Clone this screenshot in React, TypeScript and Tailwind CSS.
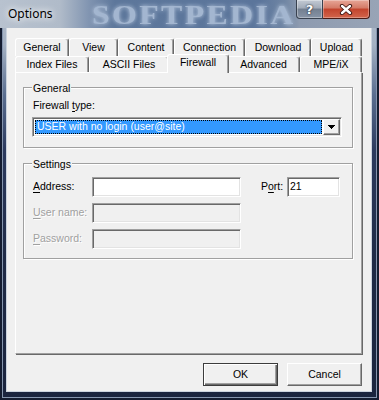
import React from 'react';

const U = ({ children }: { children: React.ReactNode }) => (
  <span className="underline underline-offset-[2px]">{children}</span>
);

const raised =
  'bg-[#f0f0f0] border border-t-white border-l-white border-r-[#696969] border-b-[#696969] shadow-[inset_-1px_-1px_0_#a0a0a0]';
const sunken =
  'border border-t-[#a0a0a0] border-l-[#a0a0a0] border-r-white border-b-white shadow-[inset_1px_1px_0_#696969,inset_-1px_-1px_0_#e3e3e3]';
const tabEdge =
  'bg-[#f0f0f0] border-t border-l border-r border-t-white border-l-white border-r-[#696969] shadow-[inset_-1px_0_0_#a0a0a0] rounded-t-[3px]';

const Tab = ({ label, className, selected }: { label: string; className: string; selected?: boolean }) => {
  if (selected) {
    return (
      <div className={`relative z-10 -mx-[2px] -mt-[2px] h-[19px] flex items-center justify-center pb-[2px] ${tabEdge} ${className}`}>
        {label}
      </div>
    );
  }
  return <div className={`h-full flex items-center justify-center ${tabEdge} ${className}`}>{label}</div>;
};

const Group = ({ title, className, children }: { title: string; className: string; children: React.ReactNode }) => (
  <div className={`relative w-[330px] pl-[8px] border border-[#a0a0a0] shadow-[inset_1px_1px_0_#fff,1px_1px_0_#fff] ${className}`}>
    <span className="absolute left-[8px] top-[-6px] bg-[#f0f0f0] px-[1px] leading-[13px]">{title}</span>
    {children}
  </div>
);

const TitleBar = () => (
  <div className="relative h-[28px] flex items-start bg-[linear-gradient(to_right,#b8c2cf_0px,#b0bbc9_60px,#7f93b0_90px,#5d779b_115px,#5b759b_260px,#7086a4_285px,#8e9bb0_300px,#98a4b6_379px)]">
    <span className="absolute left-[92px] top-0 origin-left scale-x-[1.18] font-['Liberation_Serif',serif] font-bold text-[27px] leading-[30px] tracking-[2px] text-[#a3b6d0] [text-shadow:0_0_4px_#c2d1e5]">
      SOFTPEDIA
    </span>
    <span className="relative pl-[8px] pt-[6px] font-['Noto_Sans',sans-serif] text-[12px] leading-[16px] text-black [text-shadow:0_0_6px_#fff,0_0_10px_#fff]">
      Options
    </span>
    <div className="relative ml-auto mr-[9px] flex">
      <div className="w-[27px] h-[19px] flex items-center justify-center rounded-bl-[4px] border border-t-0 border-[#38414f] bg-[linear-gradient(to_bottom,#c3cad4_0%,#a2abb8_45%,#737f90_50%,#8794a6_100%)] shadow-[inset_0_0_0_1px_rgba(255,255,255,0.35)]">
        <span className="font-['DejaVu_Sans',sans-serif] font-bold text-[13px] leading-[13px] text-white [text-shadow:0_0_2px_#202838,0_0_1px_#202838]">?</span>
      </div>
      <div className="w-[47px] h-[19px] flex items-center justify-center rounded-br-[4px] border border-t-0 border-l-0 border-[#4a1a14] bg-[linear-gradient(to_bottom,#e7a697_0%,#d47a66_45%,#c2432c_50%,#d2654c_100%)] shadow-[inset_0_0_0_1px_rgba(255,255,255,0.3)]">
        <svg width="14" height="11" viewBox="0 0 14 11">
          <path d="M3 2 L11 9 M11 2 L3 9" stroke="#3a1410" strokeWidth="4.2" strokeLinecap="round" />
          <path d="M3 2 L11 9 M11 2 L3 9" stroke="#fff" strokeWidth="2.4" strokeLinecap="round" />
        </svg>
      </div>
    </div>
  </div>
);

const DropArrow = () => (
  <svg width="7" height="4" viewBox="0 0 7 4" shapeRendering="crispEdges">
    <rect x="0" y="0" width="7" height="1" fill="#000" />
    <rect x="1" y="1" width="5" height="1" fill="#000" />
    <rect x="2" y="2" width="3" height="1" fill="#000" />
    <rect x="3" y="3" width="1" height="1" fill="#000" />
  </svg>
);

export default function App() {
  return (
    <div className="relative w-[379px] h-[400px] flex flex-col overflow-hidden bg-[linear-gradient(to_bottom,#b2bccb_0px,#a4b1c3_45px,#5a6e90_95px,#2c3a5e_150px,#1f2a46_260px,#1a243e_400px)] shadow-[inset_0_0_0_2px_#141c30,inset_0_0_0_3px_#8595ae] font-['Liberation_Sans',Arial,sans-serif] text-[10.5px] text-black">
      <TitleBar />
      <div className="flex-1 flex pl-[7px] pr-[8px] pb-[9px]">
        <div className="flex-1 flex flex-col bg-[#f0f0f0] shadow-[0_0_0_1px_#cbd3de]">
          <div className="ml-[8px] mt-[10px] w-[347px]">
            <div className="flex h-[18px]">
              <Tab label="General" className="w-[54px]" />
              <Tab label="View" className="w-[49px]" />
              <Tab label="Content" className="w-[56px]" />
              <Tab label="Connection" className="w-[71px]" />
              <Tab label="Download" className="w-[66px]" />
              <Tab label="Upload" className="w-[51px]" />
            </div>
            <div className="flex h-[16px]">
              <Tab label="Index Files" className="w-[74px]" />
              <Tab label="ASCII Files" className="w-[80px]" />
              <Tab label="Firewall" className="w-[62px]" selected />
              <Tab label="Advanced" className="w-[73px]" />
              <Tab label="MPE/iX" className="w-[62px]" />
            </div>
            <div className="h-[282px] pl-[7px] pt-[14px] border border-t-white border-l-white border-r-[#a0a0a0] border-b-[#a0a0a0] shadow-[1px_1px_0_#696969]">
              <Group title="General" className="pt-[11px] pb-[10px]">
                <div className="pl-[1px] leading-[13px]">
                  Firewall <U>t</U>ype:
                </div>
                <div className={`mt-[5px] w-[310px] h-[20px] flex py-[1px] pl-[1px] pr-[1px] bg-white ${sunken}`}>
                  <div className="flex-1 my-[1px] ml-[1px] mr-[1px] flex items-center pl-[1px] bg-[#3399ff] border border-dotted border-black text-white whitespace-nowrap">
                    USER with no login (user@site)
                  </div>
                  <div className={`w-[17px] flex items-center justify-center ${raised}`}>
                    <DropArrow />
                  </div>
                </div>
              </Group>
              <Group title="Settings" className="mt-[15px] pt-[13px] pb-[9px]">
                <div className="flex flex-col gap-[6px]">
                  <div className="flex items-center h-[20px]">
                    <span className="w-[60px] pl-[1px]">
                      <U>A</U>ddress:
                    </span>
                    <div className={`w-[149px] h-[20px] bg-white ${sunken}`} />
                    <span className="ml-[20px] w-[26px]">
                      P<U>o</U>rt:
                    </span>
                    <div className={`w-[53px] h-[20px] flex items-center pl-[2px] bg-white ${sunken}`}>21</div>
                  </div>
                  <div className="flex items-center h-[20px]">
                    <span className="w-[60px] pl-[1px] text-[#a0a0a0] [text-shadow:1px_1px_0_#fff]">
                      <U>U</U>ser name:
                    </span>
                    <div className={`w-[149px] h-[20px] bg-[#f0f0f0] ${sunken}`} />
                  </div>
                  <div className="flex items-center h-[20px]">
                    <span className="w-[60px] pl-[1px] text-[#a0a0a0] [text-shadow:1px_1px_0_#fff]">
                      <U>P</U>assword:
                    </span>
                    <div className={`w-[149px] h-[20px] bg-[#f0f0f0] ${sunken}`} />
                  </div>
                </div>
              </Group>
            </div>
            <div className="mt-[9px] flex justify-end gap-[9px]">
              <button className="w-[75px] h-[23px] flex items-center justify-center bg-[#f0f0f0] border border-[#3c3c3c] shadow-[inset_1px_1px_0_#fff,inset_-1px_-1px_0_#696969,inset_-2px_-2px_0_#a0a0a0]">
                OK
              </button>
              <button className={`w-[75px] h-[23px] flex items-center justify-center ${raised}`}>Cancel</button>
            </div>
          </div>
        </div>
      </div>
    </div>
  );
}
